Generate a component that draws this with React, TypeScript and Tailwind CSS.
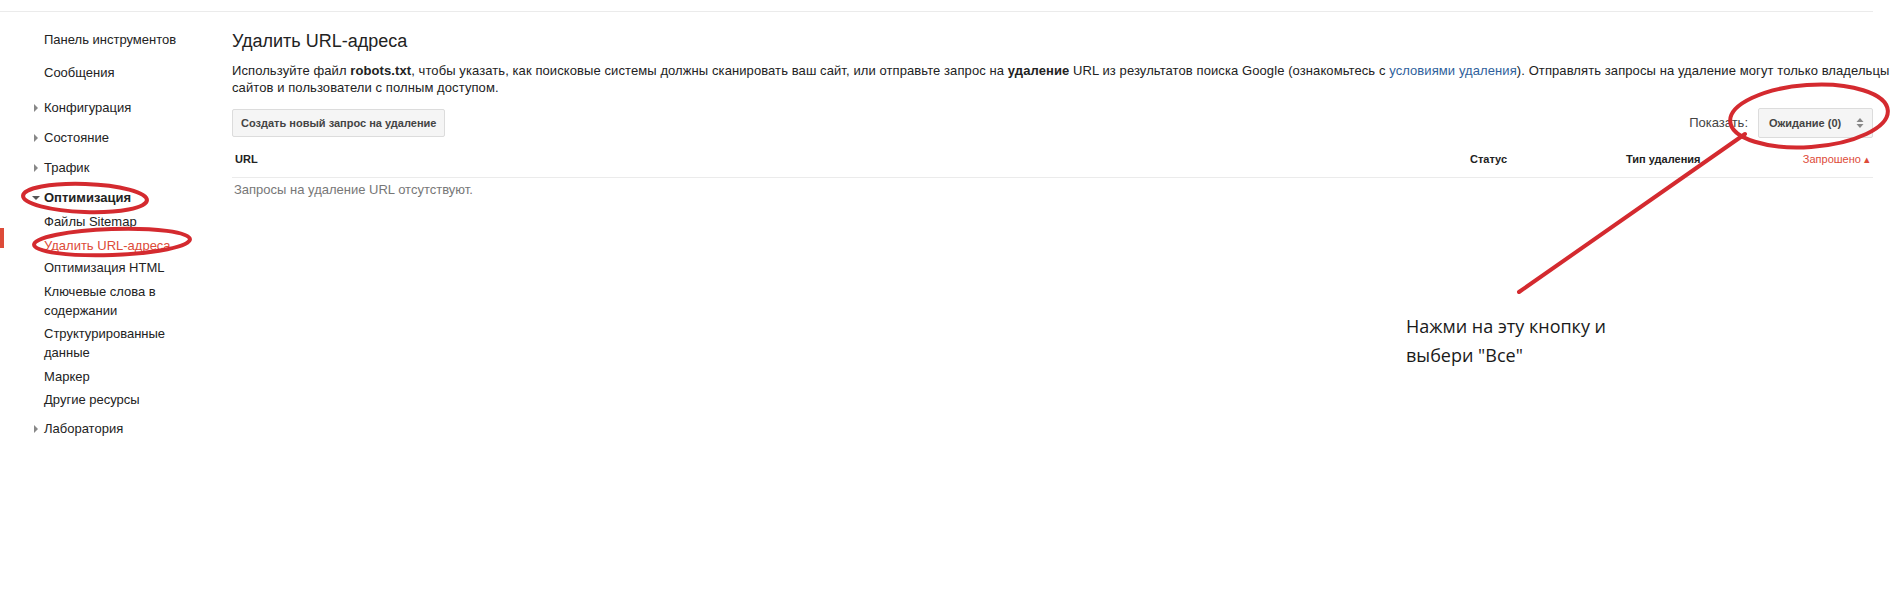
const font = { fontFamily: '"Liberation Sans", Arial, sans-serif' };

function Arrow({ down }: { down?: boolean }) {
  return (
    <svg width="8" height="8" viewBox="0 0 8 8" className="shrink-0">
      {down ? <path d="M0 2 L8 2 L4 6 Z" fill="#555" /> : <path d="M2 0 L6 4 L2 8 Z" fill="#888" />}
    </svg>
  );
}

function NavItem({ label, arrow, bold, className = '' }: { label: string; arrow?: 'right' | 'down'; bold?: boolean; className?: string }) {
  return (
    <div className={`flex items-center h-[19px] ${className}`}>
      <div className="w-[44px] flex justify-end pr-[4px]">
        {arrow && <Arrow down={arrow === 'down'} />}
      </div>
      <span className={bold ? 'font-bold text-[#222]' : 'text-[#222]'}>{label}</span>
    </div>
  );
}

function Sidebar() {
  return (
    <div className="w-[232px] shrink-0 pt-[18px] text-[13px] leading-[19px]">
      <NavItem label="Панель инструментов" />
      <NavItem label="Сообщения" className="mt-[14px]" />
      <NavItem label="Конфигурация" arrow="right" className="mt-[16px]" />
      <NavItem label="Состояние" arrow="right" className="mt-[11px]" />
      <NavItem label="Трафик" arrow="right" className="mt-[11px]" />
      <NavItem label="Оптимизация" arrow="down" bold className="mt-[11px]" />
      <div className="pl-[44px] text-[#222]">
        <div className="mt-[5px]">Файлы Sitemap</div>
        <div className="relative mt-[5px] text-[#dd4b39]">
          <div className="absolute left-[-44px] top-[-8px] w-[4px] h-[20px] bg-[#dd4b39]" />
          Удалить URL-адреса
        </div>
        <div className="mt-[3px]">Оптимизация HTML</div>
        <div className="mt-[5px] w-[120px]">Ключевые слова в содержании</div>
        <div className="mt-[4px]">Структурированные<br />данные</div>
        <div className="mt-[5px]">Маркер</div>
        <div className="mt-[4px]">Другие ресурсы</div>
      </div>
      <NavItem label="Лаборатория" arrow="right" className="mt-[10px]" />
    </div>
  );
}

function SortIcon() {
  return (
    <svg width="8" height="12" viewBox="0 0 8 12" className="shrink-0">
      <path d="M4 1 L7.5 5 L0.5 5 Z" fill="#888" />
      <path d="M4 11 L7.5 7 L0.5 7 Z" fill="#888" />
    </svg>
  );
}

function Main() {
  return (
    <div className="flex-1 min-w-0 pr-[28px] text-[#222]">
      <h1 className="mt-[18px] text-[18px] leading-[22px] font-normal text-[#222]">Удалить URL-адреса</h1>
      <p className="mt-[10px] text-[13px] leading-[17px] tracking-[0.09px] whitespace-nowrap">
        Используйте файл <b>robots.txt</b>, чтобы указать, как поисковые системы должны сканировать ваш сайт, или отправьте запрос на <b>удаление</b> URL из результатов поиска Google (ознакомьтесь с <span className="text-[#2f5f9c]">условиями удаления</span>). Отправлять запросы на удаление могут только владельцы
        <br />
        сайтов и пользователи с полным доступом.
      </p>
      <div className="mt-[12px] flex items-center justify-between">
        <button className="h-[28px] px-[8px] border border-[#dcdcdc] bg-[#f5f5f5] rounded-[2px] text-[11px] font-bold text-[#444]">
          Создать новый запрос на удаление
        </button>
        <div className="flex items-center gap-[10px]">
          <span className="text-[13px] text-[#444]">Показать:</span>
          <div className="h-[30px] w-[115px] border border-[#dcdcdc] bg-[#f5f5f5] rounded-[2px] flex items-center justify-between pl-[10px] pr-[8px]">
            <span className="text-[11px] font-bold text-[#444]">Ожидание (0)</span>
            <SortIcon />
          </div>
        </div>
      </div>
      <div className="mt-[4px] grid grid-cols-[1235px_156px_175px_1fr] items-center h-[36px] border-b border-[#ebebeb] text-[11px] font-bold text-[#222] px-[3px]">
        <span>URL</span>
        <span>Статус</span>
        <span>Тип удаления</span>
        <span className="text-right font-normal text-[#dd4b39] whitespace-nowrap">Запрошено ▴</span>
      </div>
      <div className="mt-[3px] px-[2px] text-[13px] leading-[17px] text-[#777]">Запросы на удаление URL отсутствуют.</div>
    </div>
  );
}

export default function App() {
  return (
    <div className="relative min-h-[605px] bg-white overflow-hidden" style={font}>
      <div className="h-[12px] mr-[28px] border-b border-[#ebebeb]" />
      <div className="flex">
        <Sidebar />
        <Main />
      </div>
      <svg className="absolute inset-0 pointer-events-none" width="1901" height="605">
        <g fill="none" stroke="#d42a2f" strokeWidth="4" strokeLinecap="round">
          <ellipse cx="85" cy="198" rx="62" ry="14" transform="rotate(2 85 198)" />
          <ellipse cx="112" cy="242" rx="78" ry="13" transform="rotate(-2 112 242)" />
          <ellipse cx="1809" cy="116" rx="79" ry="31" transform="rotate(-4 1809 116)" />
          <path d="M1519 292 L1745 134" />
        </g>
      </svg>
      <div
        className="absolute left-[1406px] top-[312px] text-[18px] leading-[29px] text-[#1a1a1a]"
        style={{ fontFamily: '"Open Sans", "Noto Sans", sans-serif' }}
      >
        Нажми на эту кнопку и
        <br />
        выбери "Все"
      </div>
    </div>
  );
}
